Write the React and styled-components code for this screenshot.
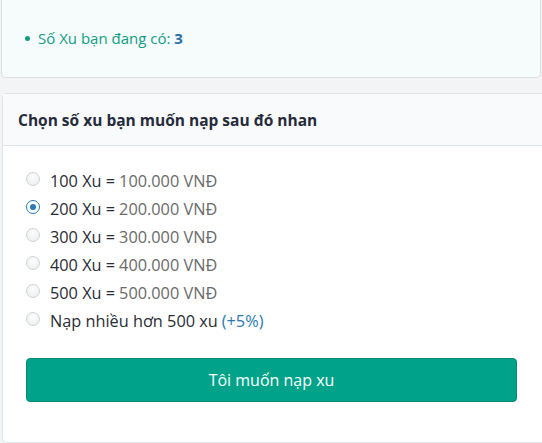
import React, { useState } from 'react';
import styled, { createGlobalStyle } from 'styled-components';

const GlobalStyle = createGlobalStyle`
  body {
    margin: 0;
    background: #f2f4f5;
    font-family: "Open Sans", "Noto Sans", sans-serif;
  }
`;

const Page = styled.div`
  width: 542px;
  height: 443px;
  overflow: hidden;
  padding-left: 1px;
  box-sizing: border-box;
`;

const InfoCard = styled.div`
  width: 540px;
  height: 78px;
  box-sizing: border-box;
  background: #f6fbfb;
  border: 1px solid #d9dfe3;
  border-top: 0;
  border-radius: 0 0 5px 5px;
  padding: 28px 0 0 23px;
`;

const InfoItem = styled.div`
  display: flex;
  align-items: center;
  gap: 8px;
  font-size: 15px;
  font-weight: 500;
  color: #139c84;

  &::before {
    content: '';
    width: 5px;
    height: 5px;
    border-radius: 50%;
    background: #139c84;
  }

  b {
    color: #2a6f9f;
  }
`;

const Card = styled.div`
  margin-top: 15px;
  margin-left: 1px;
  width: 541px;
  height: 350px;
  box-sizing: border-box;
  background: #fff;
  border: 1px solid #dfe4e7;
  border-right: 0;
  border-radius: 5px 0 0 5px;
  display: flex;
  flex-direction: column;
`;

const CardHeader = styled.div`
  height: 52px;
  box-sizing: border-box;
  display: flex;
  align-items: center;
  padding-left: 15px;
  background: #f8fafc;
  border-bottom: 1px solid #dde2e6;
  font-size: 15.5px;
  font-weight: 700;
  color: #272a3a;
`;

const CardBody = styled.div`
  padding: 24px 22px 0 22px;
`;

const Options = styled.div`
  display: flex;
  flex-direction: column;
  gap: 6px;
`;

const Option = styled.label`
  display: flex;
  align-items: center;
  gap: 10px;
  height: 22px;
  font-size: 16.3px;
  font-weight: 500;
  color: #2a2c36;
  cursor: pointer;
`;

const Radio = styled.input.attrs({ type: 'radio' })`
  appearance: none;
  margin: 0 0 4px 1px;
  width: 14px;
  height: 14px;
  border-radius: 50%;
  border: 1px solid #cfd3d7;
  background: radial-gradient(circle at 50% 35%, #fdfdfd, #e9ebed);
  box-sizing: border-box;
  display: grid;
  place-items: center;

  &:checked {
    border-color: #2b78b3;
    background: #fff;
  }

  &:checked::after {
    content: '';
    width: 6px;
    height: 6px;
    border-radius: 50%;
    background: #2a7ab5;
  }
`;

const Price = styled.span`
  color: ${(p) => (p.accent ? '#2a7ab0' : '#6a6a6a')};
  margin-left: -6px;
`;

const SubmitButton = styled.button`
  margin-top: 26px;
  width: 491px;
  height: 44px;
  margin-left: 1px;
  border: 1px solid #078a72;
  border-radius: 4px;
  background: #00a389;
  color: #fff;
  font-family: inherit;
  font-size: 16px;
  font-weight: 500;
  cursor: pointer;
`;

const packages = [100, 200, 300, 400, 500];
const fmt = (n) => (n * 1000).toLocaleString('de-DE');

export default function App() {
  const [selected, setSelected] = useState(200);

  return (
    <Page>
      <GlobalStyle />
      <InfoCard>
        <InfoItem>
          <span>
            Số Xu bạn đang có: <b>3</b>
          </span>
        </InfoItem>
      </InfoCard>
      <Card>
        <CardHeader>Chọn số xu bạn muốn nạp sau đó nhan</CardHeader>
        <CardBody>
          <Options>
            {packages.map((p) => (
              <Option key={p}>
                <Radio name="xu" checked={selected === p} onChange={() => setSelected(p)} />
                <span>{p} Xu =</span>
                <Price>{fmt(p)} VNĐ</Price>
              </Option>
            ))}
            <Option>
              <Radio name="xu" checked={selected === 'more'} onChange={() => setSelected('more')} />
              <span>Nạp nhiều hơn 500 xu</span>
              <Price accent>(+5%)</Price>
            </Option>
          </Options>
          <SubmitButton>Tôi muốn nạp xu</SubmitButton>
        </CardBody>
      </Card>
    </Page>
  );
}
